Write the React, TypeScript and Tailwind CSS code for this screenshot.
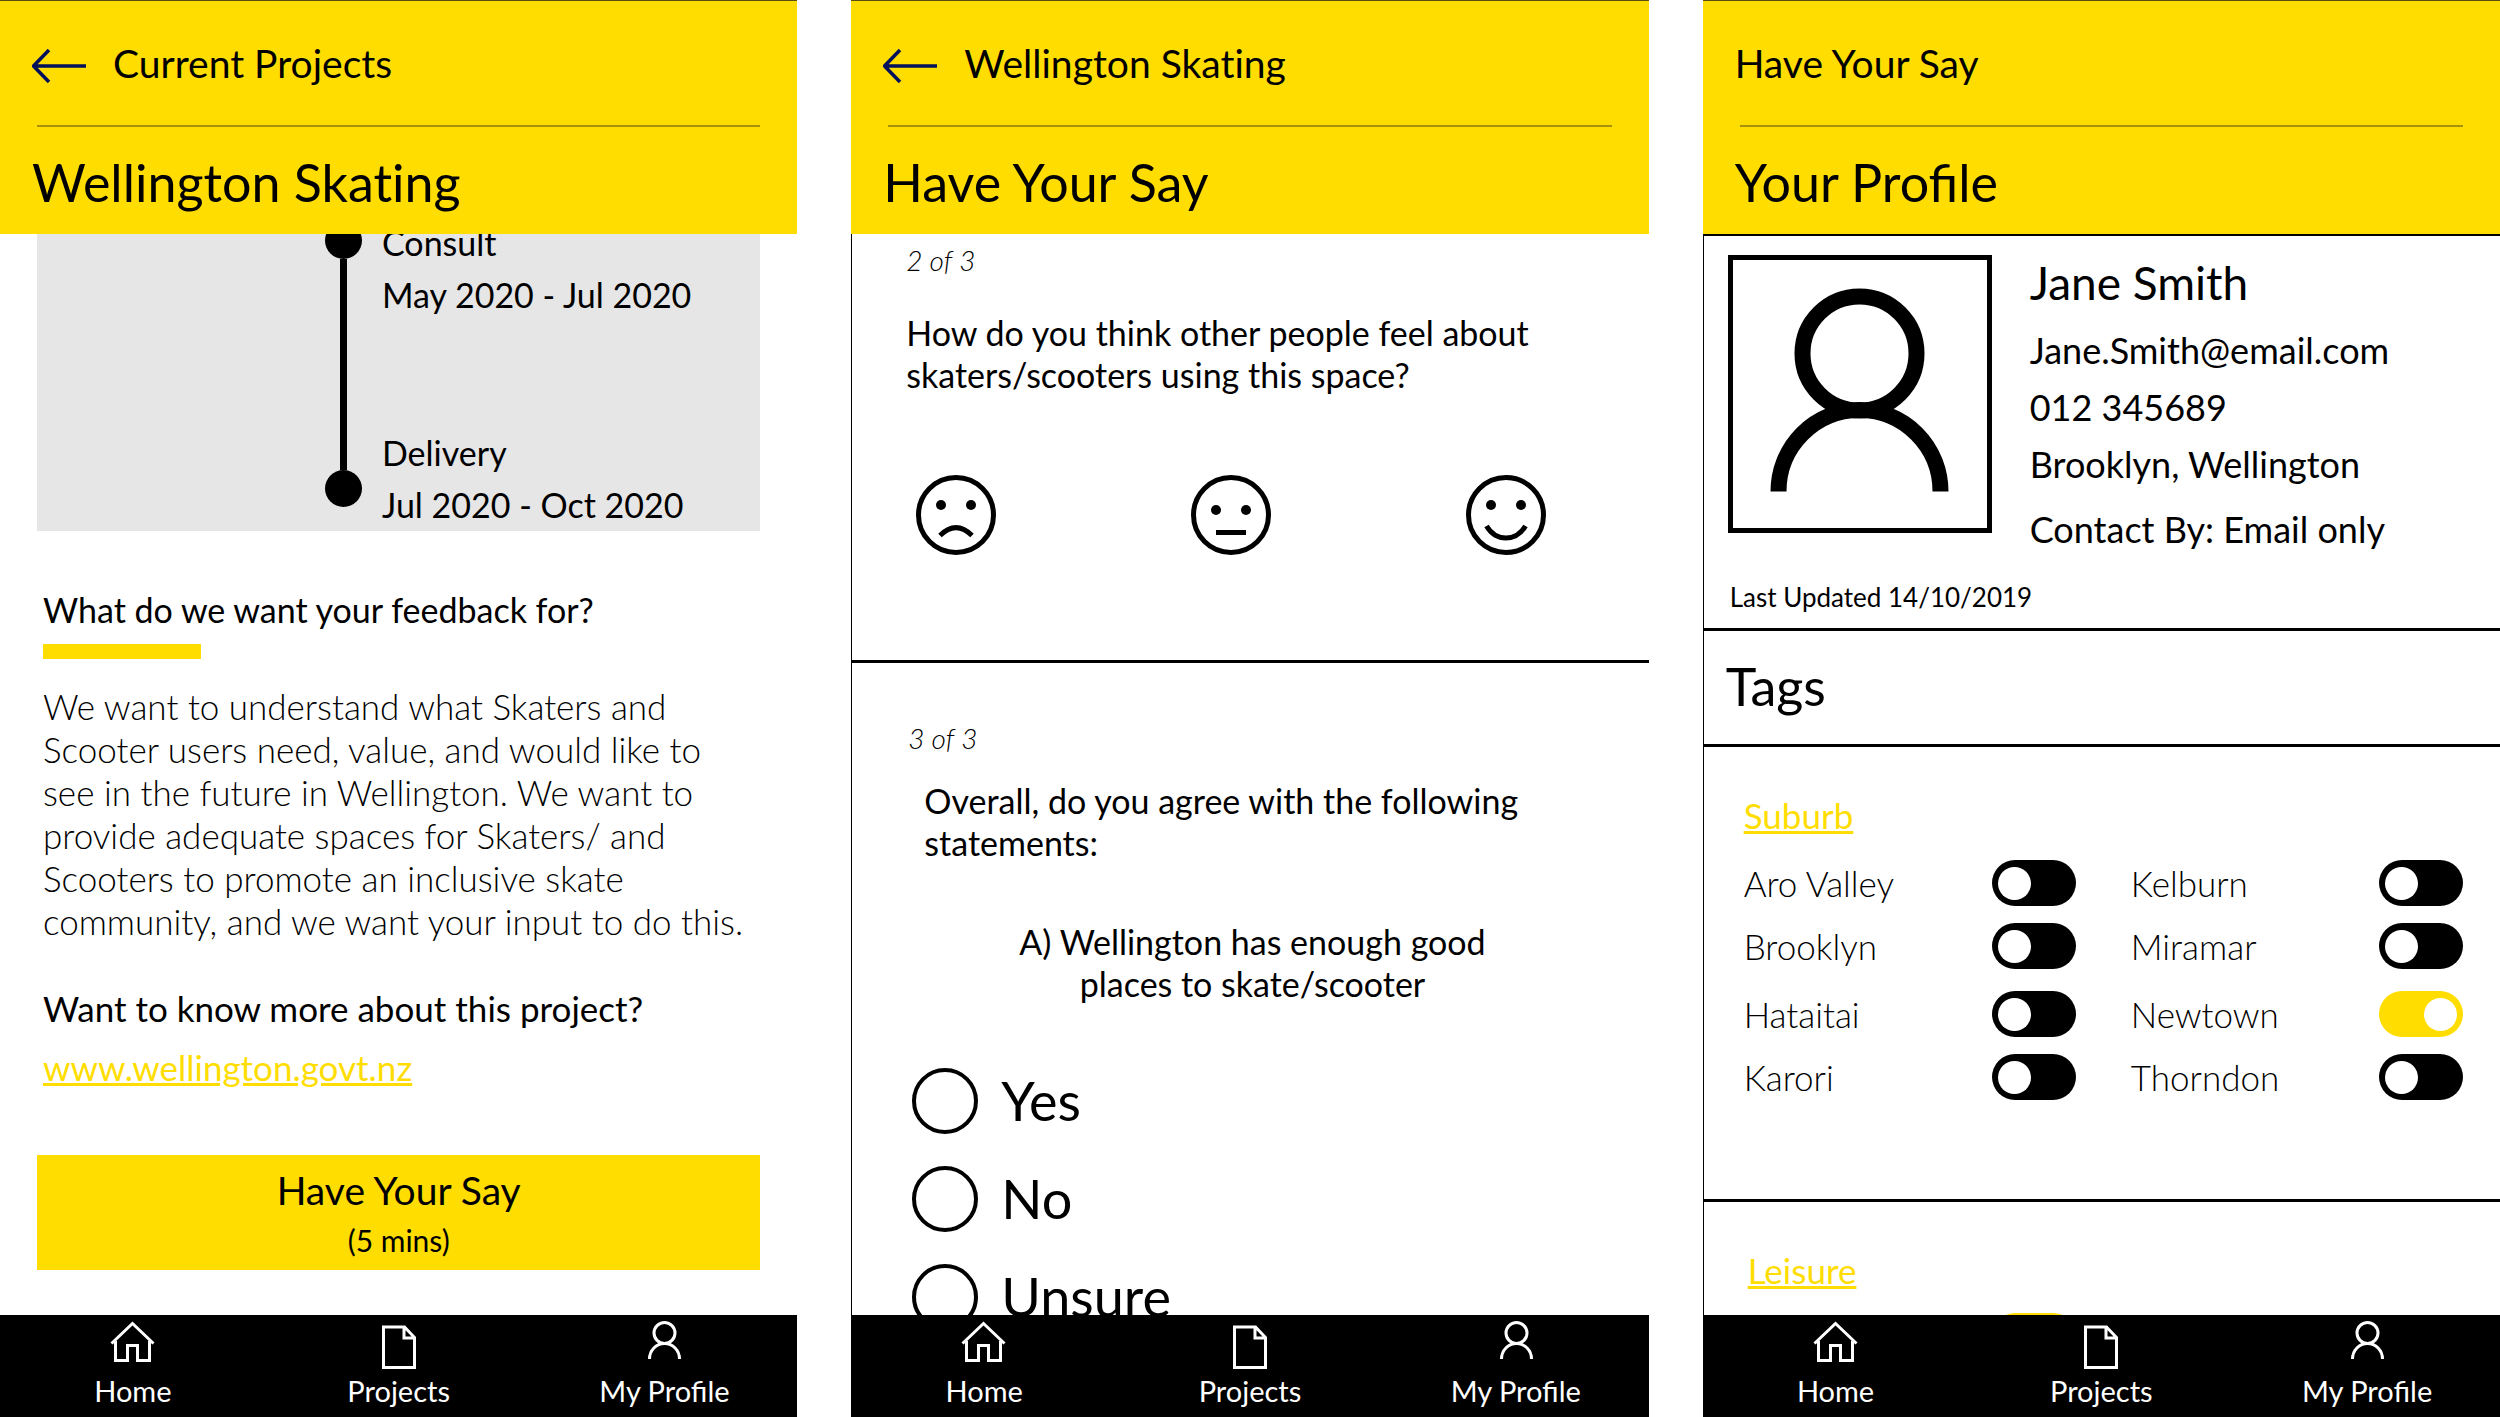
import React from "react";

type Mood = "sad" | "neutral" | "happy";

function BackArrow() {
  return (
    <svg viewBox="0 0 56 40" className="h-10 w-14 shrink-0" fill="none" stroke="#00105a" strokeWidth="3.5" aria-hidden="true">
      <path d="M17 7 1.500 23 17 39M1.500 23H54" />
    </svg>
  );
}

function Header({ crumb, title, back }: { crumb: string; title: string; back?: boolean }) {
  return (
    <header className="shrink-0 border-t border-[#5a4d10] bg-[#ffdd00]">
      <div className="flex h-[124px] items-center px-8 text-[39px] leading-[48px]">
        {back ? (
          <a href="#back" className="flex items-center gap-[25px] [font-variant-ligatures:none]">
            <BackArrow />
            {crumb}
          </a>
        ) : (
          <p>{crumb}</p>
        )}
      </div>
      <hr className="mx-[37px] border-t-2 border-[#a8920c]" />
      <h1
        className={
          back
            ? "flex h-[107px] items-center px-8 pt-0.5 text-[52px] leading-[68px] [font-variant-ligatures:none]"
            : "flex h-[107px] items-center px-8 pt-0.5 text-[52px] leading-[68px]"
        }
      >
        {title}
      </h1>
    </header>
  );
}

function HomeIcon() {
  return (
    <svg viewBox="0 0 60 52" className="h-[52px] w-[60px]" fill="none" stroke="#fff" strokeWidth="3" aria-hidden="true">
      <path d="M8.5 24.5 29.5 4.5 50.5 24.5M12.5 22V41.5H24.5V26.5H34.5V41.5H46.5V22" />
    </svg>
  );
}

function DocumentIcon() {
  return (
    <svg viewBox="0 0 60 52" className="h-[52px] w-[60px]" fill="none" stroke="#fff" strokeWidth="3" aria-hidden="true">
      <path d="M14.5 8H35.5L45.5 18.5V48.5H14.5ZM35 8V19H45.5" />
    </svg>
  );
}

function PersonIcon() {
  return (
    <svg viewBox="0 0 60 52" className="h-[52px] w-[60px]" fill="none" stroke="#fff" strokeWidth="3" aria-hidden="true">
      <circle cx="30.500" cy="14" r="10.5" />
      <path d="M15.500 40A15 15.5 0 0 1 45.500 40" />
    </svg>
  );
}

const tabs = [
  { label: "Home", Icon: HomeIcon },
  { label: "Projects", Icon: DocumentIcon },
  { label: "My Profile", Icon: PersonIcon },
];

function TabBar() {
  return (
    <nav className="grid shrink-0 grid-cols-3 bg-black pt-1 pb-1.5 text-white">
      {tabs.map(({ label, Icon }) => (
        <a key={label} href="#tab" className="flex flex-col items-center text-[29px] leading-10">
          <Icon />
          {label}
        </a>
      ))}
    </nav>
  );
}

function Screen({ children }: { children: React.ReactNode }) {
  return <section className="flex min-h-0 min-w-0 flex-col overflow-hidden">{children}</section>;
}

function ProjectScreen() {
  return (
    <Screen>
      <Header crumb="Current Projects" title="Wellington Skating" back />
      <main className="min-h-0 flex-1 overflow-hidden px-[37px] text-[35px] leading-[44px]">
        <div className="flex gap-5 overflow-hidden bg-[#e6e6e6] pl-[288px]">
          <div className="-mt-3 mb-6 flex flex-col items-center" aria-hidden="true">
            <span className="size-[37px] rounded-full bg-black" />
            <span className="w-[7px] flex-1 bg-black" />
            <span className="size-[37px] rounded-full bg-black" />
          </div>
          <ol className="-mt-[17px] text-[34px] leading-[52px]">
            <li className="mb-[106px]">
              <p>Consult</p>
              <p>May 2020 - Jul 2020</p>
            </li>
            <li>
              <p>Delivery</p>
              <p>Jul 2020 - Oct 2020</p>
            </li>
          </ol>
        </div>
        <div className="pt-[57px] pl-1.5">
          <h2 className="text-[34px]">What do we want your feedback for?</h2>
          <div className="mt-3 h-[15px] w-[158px] bg-[#ffdd00]" />
          <p className="mt-[26px] leading-[43px] font-light whitespace-nowrap">
            We want to understand what Skaters and
            <br />
            Scooter users need, value, and would like to
            <br />
            see in the future in Wellington. We want to
            <br />
            provide adequate spaces for Skaters/ and
            <br />
            Scooters to promote an inclusive skate
            <br />
            community, and we want your input to do this.
          </p>
          <h2 className="mt-[43px]">Want to know more about this project?</h2>
          <a href="#site" className="mt-[15px] inline-block text-[#ffdd00] underline">
            www.wellington.govt.nz
          </a>
        </div>
        <button type="button" className="mt-[66px] block w-full bg-[#ffdd00] pt-2.5 pb-[5px]">
          <span className="block text-[39px] leading-[50px]">Have Your Say</span>
          <span className="block text-[30px] leading-[50px]">(5 mins)</span>
        </button>
      </main>
      <TabBar />
    </Screen>
  );
}

function Face({ mood }: { mood: Mood }) {
  const eyeY = mood === "neutral" ? 35 : 30;
  return (
    <svg viewBox="0 0 80 80" className="size-20" fill="none" stroke="#000" strokeWidth="5" aria-hidden="true">
      <circle cx="40" cy="40" r="37.5" />
      <circle cx="25" cy={eyeY} r="5" fill="#000" stroke="none" />
      <circle cx="55" cy={eyeY} r="5" fill="#000" stroke="none" />
      {mood === "sad" && <path d="M24 60.500Q40 44.500 56 60.500" />}
      {mood === "neutral" && <path d="M25 57.500H55" />}
      {mood === "happy" && <path d="M20.500 51C30 67 50 67 59.500 51" />}
    </svg>
  );
}

const moods: Mood[] = ["sad", "neutral", "happy"];

function SurveyScreen() {
  return (
    <Screen>
      <Header crumb="Wellington Skating" title="Have Your Say" back />
      <main className="min-h-0 flex-1 overflow-hidden border-l border-black text-[34px] leading-[42px]">
        <section className="border-b-[3px] border-black pt-1.5 pr-[103px] pb-[105px] pl-[54px]">
          <p className="text-[28px] leading-10 font-light italic">2 of 3</p>
          <h2 className="mt-8 whitespace-nowrap">
            How do you think other people feel about
            <br />
            skaters/scooters using this space?
          </h2>
          <div className="mt-[79px] ml-2.5 flex justify-between">
            {moods.map((mood) => (
              <label key={mood} className="cursor-pointer">
                <input type="radio" name="feeling" aria-label={mood} className="sr-only" />
                <Face mood={mood} />
              </label>
            ))}
          </div>
        </section>
        <section className="pt-[55px] pl-14">
          <p className="text-[28px] leading-10 font-light italic">3 of 3</p>
          <h2 className="mt-[22px] pl-4">
            Overall, do you agree with the following
            <br />
            statements:
          </h2>
          <p className="mt-[57px] pr-[52px] text-center">
            A) Wellington has enough good
            <br />
            places to skate/scooter
          </p>
          <div className="mt-[63px] flex flex-col items-start gap-8 pl-1">
            {["Yes", "No", "Unsure"].map((answer) => (
              <label key={answer} className="flex h-[66px] items-center gap-[23px] text-[54px] leading-[60px]">
                <input
                  type="radio"
                  name="answer"
                  className="size-[66px] appearance-none rounded-full border-4 border-black checked:bg-black"
                />
                {answer}
              </label>
            ))}
          </div>
        </section>
      </main>
      <TabBar />
    </Screen>
  );
}

function Toggle({ label, on }: { label?: string; on?: boolean }) {
  return (
    <label className="flex h-[46px] items-center justify-between font-light">
      <span>{label}</span>
      <input
        type="checkbox"
        role="switch"
        defaultChecked={on}
        className="flex h-[46px] w-[84px] appearance-none items-center rounded-full bg-black px-1.5 before:size-[33px] before:rounded-full before:bg-white checked:justify-end checked:bg-[#ffdd00]"
      />
    </label>
  );
}

function ToggleGrid({ children }: { children: React.ReactNode }) {
  return <div className="grid grid-cols-2 gap-x-[55px] gap-y-[17px]">{children}</div>;
}

function ProfileScreen() {
  return (
    <Screen>
      <Header crumb="Have Your Say" title="Your Profile" />
      <main className="min-h-0 flex-1 overflow-hidden border-t-2 border-l border-black text-[35px] leading-[44px]">
        <section className="border-b-[3px] border-black pt-[17px] pb-[13px] pl-6">
          <div className="flex gap-[38px]">
            <svg viewBox="0 0 264 278" className="mt-0.5 h-[278px] w-[264px] shrink-0" fill="none" stroke="#000" role="img" aria-label="Profile picture">
              <rect x="2.5" y="2.500" width="259" height="273" strokeWidth="5" />
              <circle cx="131.500" cy="98.500" r="57" strokeWidth="16" />
              <path d="M50.500 236.500A81 81.500 0 0 1 212.500 236.500" strokeWidth="16" />
            </svg>
            <div className="text-4xl leading-[57px]">
              <h2 className="mb-[9px] text-[46px] leading-[60px]">Jane Smith</h2>
              <p>Jane.Smith@email.com</p>
              <p>012 345689</p>
              <p>Brooklyn, Wellington</p>
              <p className="mt-2">Contact By: Email only</p>
            </div>
          </div>
          <p className="mt-[21px] pl-0.5 text-[26px] leading-9">Last Updated 14/10/2019</p>
        </section>
        <h2 className="border-b-[3px] border-black px-[22px] pt-[21px] pb-6 text-[52px] leading-[68px]">Tags</h2>
        <section className="border-b-[3px] border-black pt-[46px] pr-[37px] pb-[99px] pl-10">
          <h3>
            <a href="#suburb" className="text-[#ffdd00] underline">
              Suburb
            </a>
          </h3>
          <div className="mt-[23px] flex flex-col gap-[22px]">
            <ToggleGrid>
              <Toggle label="Aro Valley" />
              <Toggle label="Kelburn" />
              <Toggle label="Brooklyn" />
              <Toggle label="Miramar" />
            </ToggleGrid>
            <ToggleGrid>
              <Toggle label="Hataitai" />
              <Toggle label="Newtown" on />
              <Toggle label="Karori" />
              <Toggle label="Thorndon" />
            </ToggleGrid>
          </div>
        </section>
        <section className="pt-[46px] pr-[37px] pl-10">
          <h3 className="mb-[21px] pl-1">
            <a href="#leisure" className="text-[#ffdd00] underline">
              Leisure
            </a>
          </h3>
          <ToggleGrid>
            <Toggle on />
          </ToggleGrid>
        </section>
      </main>
      <TabBar />
    </Screen>
  );
}

export default function App() {
  return (
    <div className="grid h-screen grid-cols-3 grid-rows-1 gap-[54px] overflow-hidden bg-white font-['Lato',sans-serif] text-black">
      <ProjectScreen />
      <SurveyScreen />
      <ProfileScreen />
    </div>
  );
}
